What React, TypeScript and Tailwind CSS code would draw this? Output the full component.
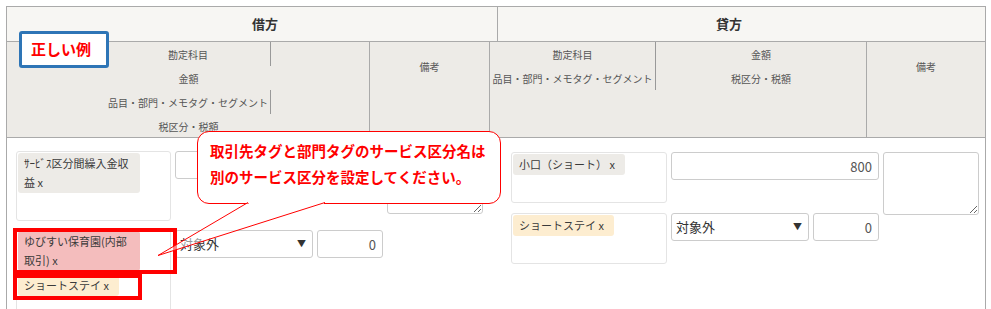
import React from "react"

function Tag({ color, wide, children }: { color: string; wide?: boolean; children: React.ReactNode }) {
  return (
    <div
      className={`${color} ${wide ? "w-[122px] pr-[6px]" : "w-fit pr-[10px]"} whitespace-nowrap rounded-[3px] py-[1px] pl-[6px] text-[11px] leading-[19px] text-[#3a3a3a]`}
    >
      {children}
    </div>
  )
}

function TagBox({ children }: { children: React.ReactNode }) {
  return (
    <div className="flex flex-col items-start gap-[4px] rounded-[3px] border border-[#e4e4e4] p-[1px] pb-[27px]">
      {children}
    </div>
  )
}

function Amount({ value }: { value: string }) {
  return (
    <input
      readOnly
      value={value}
      className="h-[28px] w-full rounded-[3px] border border-[#ccc] bg-white px-[6px] text-right text-[13px] text-[#555] outline-none"
    />
  )
}

function TaxRow({ className = "" }: { className?: string }) {
  return (
    <div className={`flex gap-[4px] self-start ${className}`}>
      <div className="flex h-[28px] w-[138px] items-center justify-between rounded-[3px] border border-[#ccc] bg-white pl-[4px] pr-[6px] text-[13px] text-[#333]">
        <span>対象外</span>
        <span className="text-[9px] text-[#333]">▼</span>
      </div>
      <div className="flex-1">
        <Amount value="0" />
      </div>
    </div>
  )
}

function Memo() {
  return (
    <textarea
      readOnly
      className="row-span-2 h-[63px] w-full self-start rounded-[3px] border border-[#ccc] bg-white outline-none"
    />
  )
}

export default function App() {
  return (
    <div className="relative h-[309px] w-[991px] overflow-hidden bg-white font-['Noto_Sans_CJK_JP','Noto_Sans',sans-serif] text-[#333]">
      <div className="ml-[6px] mt-[6px] w-[980px] border-x border-t border-[#aaa]">
        {/* header: 借方 / 貸方 */}
        <div className="flex h-[35px] border-b border-[#aaa] bg-[#f7f6f3] text-[13px] font-bold text-[#333]">
          <div className="flex w-[491px] items-center justify-center border-r border-[#aaa] pl-[26px]">借方</div>
          <div className="flex flex-1 items-center justify-center pr-[25px]">貸方</div>
        </div>

        {/* header: sub columns */}
        <div className="flex h-[96px] border-b border-[#aaa] bg-[#edebe7] text-[10px] text-[#555]">
          <div className="w-[363px] border-r border-[#aaa]">
            <div className="ml-[99px] w-[165px]">
              <div className="flex h-[24px] items-center justify-center border-r border-[#999]">勘定科目</div>
              <div className="flex h-[24px] items-center justify-center">金額</div>
              <div className="flex h-[24px] items-center justify-center border-r border-[#999]">品目・部門・メモタグ・セグメント</div>
              <div className="flex h-[24px] items-center justify-center">税区分・税額</div>
            </div>
          </div>
          <div className="w-[120px] border-r border-[#aaa]">
            <div className="flex h-[48px] items-center justify-center">備考</div>
          </div>
          <div className="w-[166px]">
            <div className="border-r border-[#999]">
              <div className="flex h-[24px] items-center justify-center">勘定科目</div>
              <div className="flex h-[24px] items-center justify-center">品目・部門・メモタグ・セグメント</div>
            </div>
          </div>
          <div className="w-[211px] border-r border-[#aaa]">
            <div className="flex h-[24px] items-center justify-center">金額</div>
            <div className="flex h-[24px] items-center justify-center">税区分・税額</div>
          </div>
          <div className="flex-1">
            <div className="flex h-[48px] items-center justify-center">備考</div>
          </div>
        </div>

        {/* body */}
        <div className="flex h-[200px] pl-[9px] pt-[13px]">
          <div className="grid grid-cols-[155px_208px_96px] gap-x-[4px] gap-y-[8px] self-start">
            <TagBox>
              <Tag color="bg-[#edebe7]" wide>
                ｻｰﾋﾞｽ区分間繰入金収
                <br />益 x
              </Tag>
            </TagBox>
            <div className="self-start">
              <Amount value="" />
            </div>
            <Memo />
            <TagBox>
              <Tag color="bg-[#f4bdbd]" wide>
                ゆびすい保育園(内部
                <br />取引) x
              </Tag>
              <Tag color="bg-[#fdedd0]">ショートステイ x</Tag>
              <div className="h-[40px]" />
            </TagBox>
            <TaxRow className="mt-[1px]" />
          </div>

          <div className="ml-[28px] mt-[1px] grid grid-cols-[156px_208px_96px] gap-x-[4px] gap-y-[10px] self-start">
            <TagBox>
              <Tag color="bg-[#edebe7]">小口（ショート） x</Tag>
            </TagBox>
            <div className="self-start">
              <Amount value="800" />
            </div>
            <Memo />
            <TagBox>
              <Tag color="bg-[#fdedd0]">ショートステイ x</Tag>
            </TagBox>
            <TaxRow />
          </div>
        </div>
      </div>

      {/* 正しい例 label */}
      <div className="absolute left-[19px] top-[31px] flex h-[37px] w-[90px] items-center rounded-[3px] border-[3px] border-[#2e75b6] bg-white pl-[9px] text-[15px] font-bold text-[#ff0000]">
        正しい例
      </div>

      {/* highlight frames */}
      <div className="absolute left-[13px] top-[228px] h-[46px] w-[164px] border-4 border-[#ff0000]" />
      <div className="absolute left-[13px] top-[274px] h-[26px] w-[129px] border-4 border-[#ff0000]" />

      {/* callout */}
      <div className="absolute left-[197px] top-[131px] h-[73px] w-[304px] rounded-[12px] border border-[#ff0000] bg-white pl-[12px] pt-[6px] text-[14.5px] font-bold leading-[26px] text-[#ff0000]">
        <div>取引先タグと部門タグのサービス区分名は</div>
        <div>別のサービス区分を設定してください。</div>
      </div>
      <svg className="pointer-events-none absolute left-0 top-0" width="991" height="309" viewBox="0 0 991 309">
        <polygon points="248,202.5 158,255.5 325,202.5" fill="white" fillOpacity="0.5" />
        <line x1="249" y1="203.5" x2="324" y2="203.5" stroke="white" strokeWidth="2" />
        <polyline points="248,202.5 158,255.5 325,202.5" fill="none" stroke="#ff0000" strokeWidth="1" />
      </svg>
    </div>
  )
}
